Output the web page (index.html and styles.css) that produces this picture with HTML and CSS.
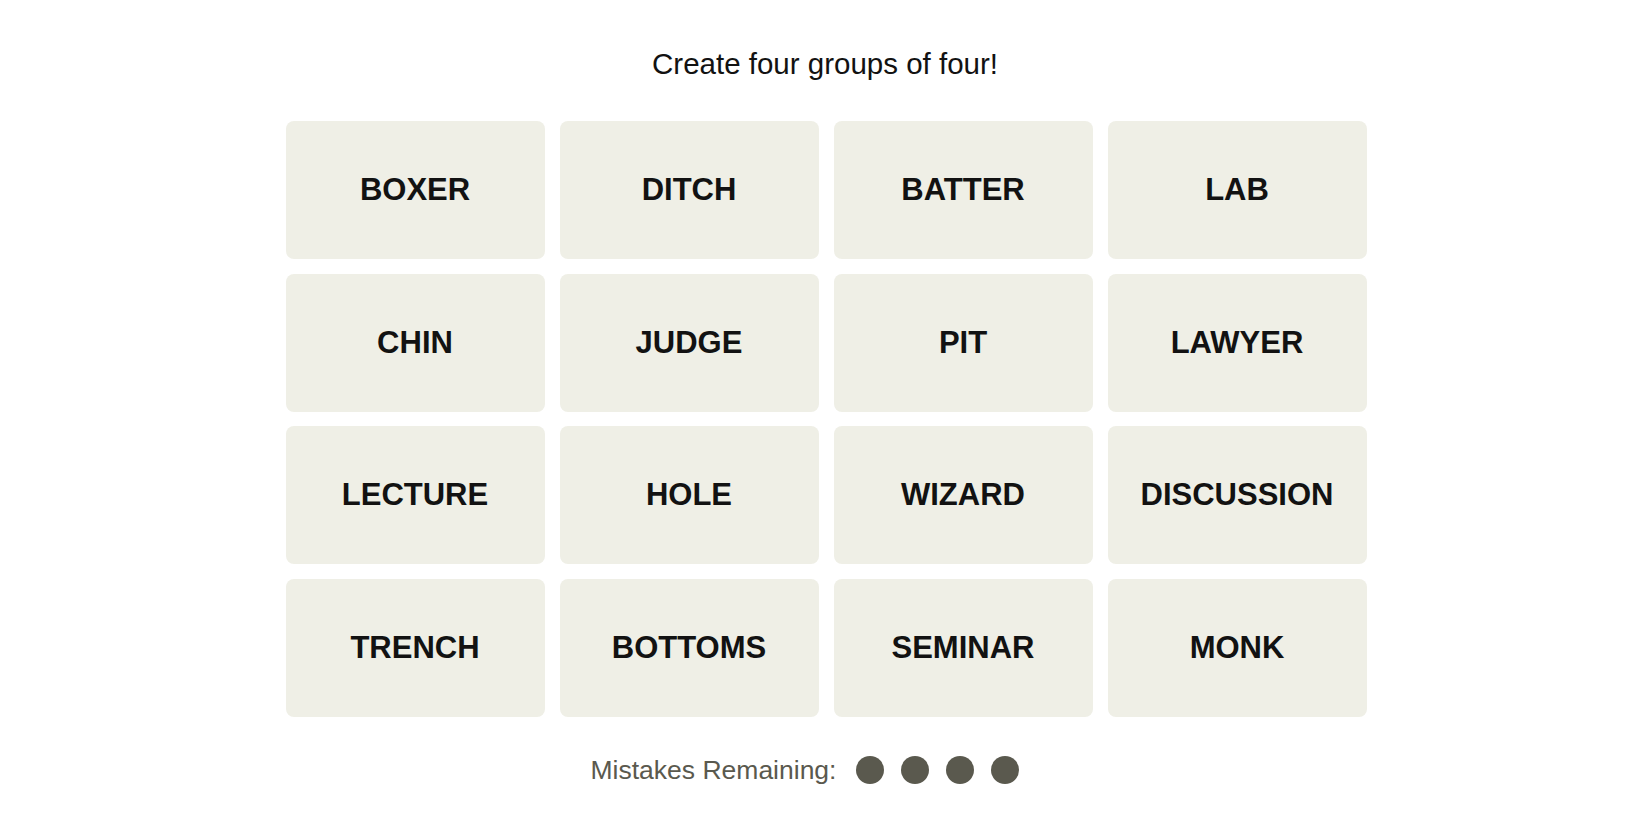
FILE: index.html
```html
<!DOCTYPE html>
<html lang="en">
<head>
<meta charset="utf-8">
<title>Connections</title>
<link rel="stylesheet" href="styles.css">
</head>
<body>
<main class="game">
  <p class="prompt">Create four groups of four!</p>
  <div class="board">
    <button class="tile">BOXER</button>
    <button class="tile">DITCH</button>
    <button class="tile">BATTER</button>
    <button class="tile">LAB</button>
    <button class="tile">CHIN</button>
    <button class="tile">JUDGE</button>
    <button class="tile">PIT</button>
    <button class="tile">LAWYER</button>
    <button class="tile">LECTURE</button>
    <button class="tile">HOLE</button>
    <button class="tile">WIZARD</button>
    <button class="tile">DISCUSSION</button>
    <button class="tile">TRENCH</button>
    <button class="tile">BOTTOMS</button>
    <button class="tile">SEMINAR</button>
    <button class="tile">MONK</button>
  </div>
  <div class="mistakes">
    <span class="mistakes-label">Mistakes Remaining:</span>
    <span class="dots">
      <span class="dot"></span>
      <span class="dot"></span>
      <span class="dot"></span>
      <span class="dot"></span>
    </span>
  </div>
</main>
</body>
</html>
```
FILE: styles.css
```css
* { box-sizing: border-box; }

html, body {
  margin: 0;
  padding: 0;
  background: #ffffff;
}

body {
  font-family: "Liberation Sans", Arial, sans-serif;
  color: #121212;
}

.game {
  display: flex;
  flex-direction: column;
  align-items: center;
  padding-top: 46px;
}

.prompt {
  margin: 0;
  font-size: 29.5px;
  line-height: 36px;
  font-weight: 400;
  color: #121212;
}

.board {
  margin-top: 39px;
  margin-left: 2px;
  display: grid;
  grid-template-columns: repeat(4, 259px);
  grid-auto-rows: 138px;
  column-gap: 15px;
  row-gap: 14.5px;
}

.tile {
  border: none;
  margin: 0;
  padding: 0;
  background: #efefe6;
  border-radius: 8px;
  font-family: "Liberation Sans", Arial, sans-serif;
  font-weight: 700;
  font-size: 31px;
  color: #121212;
  display: flex;
  align-items: center;
  justify-content: center;
}

.mistakes {
  margin-top: 38px;
  display: flex;
  align-items: center;
  gap: 20px;
  padding-right: 40px;
}

.mistakes-label {
  font-size: 26.5px;
  line-height: 30px;
  color: #5a594e;
}

.dots {
  display: flex;
  gap: 17px;
}

.dot {
  width: 28px;
  height: 28px;
  border-radius: 50%;
  background: #5a594e;
}
```
